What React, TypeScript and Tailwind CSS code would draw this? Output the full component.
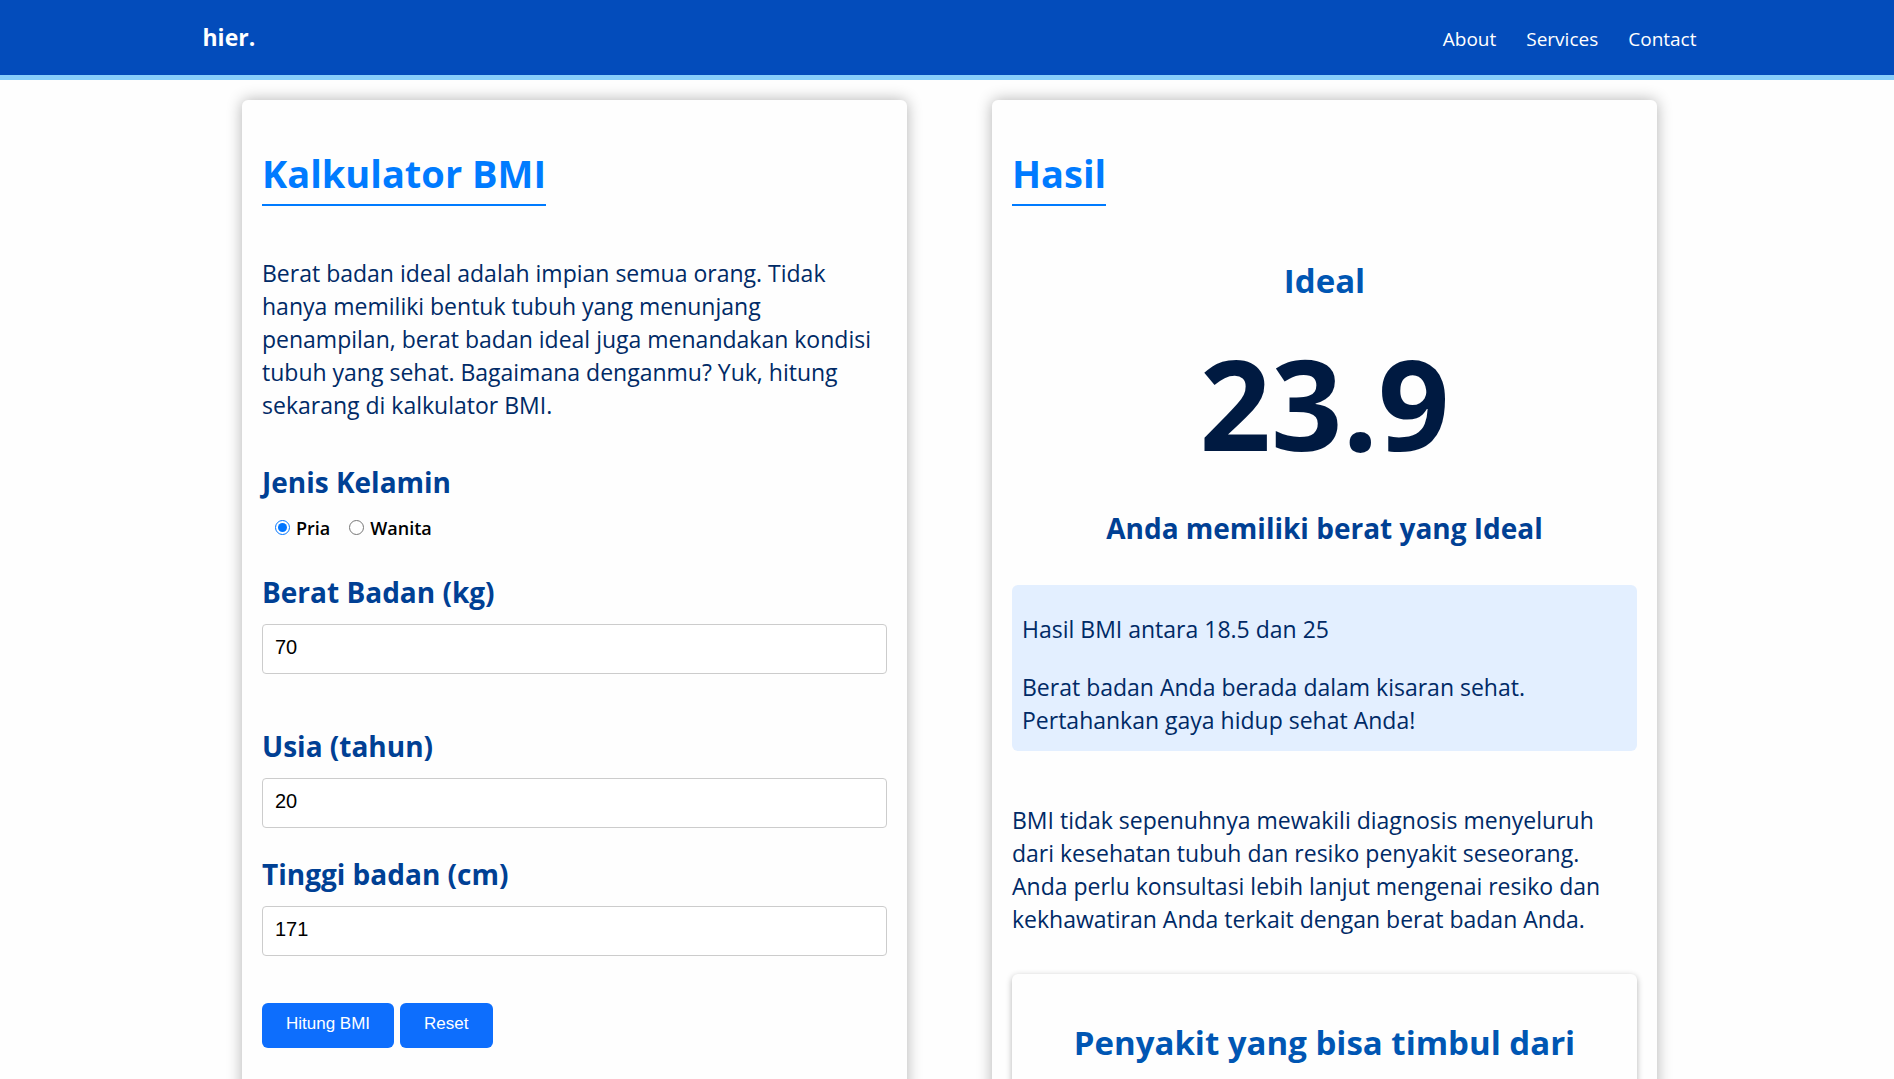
import { useState } from "react";
import type { FormEvent, ReactNode } from "react";

const navItems = ["About", "Services", "Contact"];

function Card({ children }: { children: ReactNode }) {
  return (
    <section className="w-full max-w-[665px] rounded-md bg-[#fefefe] p-5 shadow-[0_0_15px_rgba(0,0,0,0.3)]">
      {children}
    </section>
  );
}

function Title({ children }: { children: ReactNode }) {
  return (
    <h1 className="mt-[25px] w-fit border-b-2 border-[#007bff] pb-[3px] text-[38px] leading-14 font-bold text-[#007bff]">
      {children}
    </h1>
  );
}

function NumberField({ id, label, value, onChange }: { id: string; label: string; value: string; onChange: (v: string) => void }) {
  return (
    <div>
      <label htmlFor={id} className="block text-[28px] leading-10 font-bold text-[#004094]">
        {label}
      </label>
      <input
        id={id}
        type="text"
        inputMode="numeric"
        value={value}
        onChange={(e) => onChange(e.target.value)}
        className="mt-3 block h-[50px] w-full rounded-sm border border-[#cccccc] bg-white px-3 pb-1 font-['Liberation_Sans',sans-serif] text-xl text-black"
      />
    </div>
  );
}

export default function App() {
  const [gender, setGender] = useState("Pria");
  const [weight, setWeight] = useState("70");
  const [age, setAge] = useState("20");
  const [height, setHeight] = useState("171");

  const buttonClass =
    "h-[45px] rounded-md bg-[#0d6efd] px-6 pb-1 font-['Liberation_Sans',sans-serif] text-[17px] text-white";

  return (
    <div className="min-h-screen bg-[#fefefe] font-['Open_Sans',sans-serif]">
      <header className="border-b-5 border-[#87cefa] bg-[#034cbb] pl-[5px] text-white">
        <div className="mx-auto flex h-[75px] max-w-[1500px] items-center justify-between">
          <a href="#" className="pl-[3px] text-[23px] font-bold">hier.</a>
          <nav className="flex gap-[30px] pt-1 pr-[3px] text-[19px]">
            {navItems.map((item) => (
              <a key={item} href={`#${item.toLowerCase()}`}>{item}</a>
            ))}
          </nav>
        </div>
      </header>

      <main className="pt-5 pb-5 pl-[5px]">
        <div className="mx-auto flex max-w-[1500px] justify-around">
          <Card>
            <Title>Kalkulator BMI</Title>
            <p className="mt-[51px] text-[23px] leading-[33px] text-[#002a66]">
              Berat badan ideal adalah impian semua orang. Tidak hanya memiliki bentuk tubuh yang menunjang
              penampilan, berat badan ideal juga menandakan kondisi tubuh yang sehat. Bagaimana denganmu? Yuk,
              hitung sekarang di kalkulator BMI.
            </p>
            <form onSubmit={(e: FormEvent) => e.preventDefault()}>
              <fieldset className="mt-10">
                <legend className="text-[28px] leading-10 font-bold text-[#004094]">Jenis Kelamin</legend>
                <div className="mt-3.5 flex gap-[19px] pl-[13px] text-lg leading-6 font-semibold text-black">
                  {["Pria", "Wanita"].map((option) => (
                    <label key={option} className="flex gap-1.5">
                      <input
                        type="radio"
                        name="gender"
                        checked={gender === option}
                        onChange={() => setGender(option)}
                        className="mt-1 size-[15px] accent-[#0075ff]"
                      />
                      {option}
                    </label>
                  ))}
                </div>
              </fieldset>
              <div className="mt-8">
                <NumberField id="berat" label="Berat Badan (kg)" value={weight} onChange={setWeight} />
              </div>
              <div className="mt-[52px]">
                <NumberField id="usia" label="Usia (tahun)" value={age} onChange={setAge} />
              </div>
              <div className="mt-[26px]">
                <NumberField id="tinggi" label="Tinggi badan (cm)" value={height} onChange={setHeight} />
              </div>
              <div className="mt-[47px] flex gap-1.5">
                <button type="submit" className={buttonClass}>Hitung BMI</button>
                <button
                  type="button"
                  className={buttonClass}
                  onClick={() => {
                    setWeight("");
                    setAge("");
                    setHeight("");
                  }}
                >
                  Reset
                </button>
              </div>
            </form>
          </Card>

          <Card>
            <Title>Hasil</Title>
            <div className="mt-[51px] text-center font-bold">
              <h2 className="text-[33px] leading-12 text-[#0056b3]">Ideal</h2>
              <p className="mt-[18px] text-[125px] leading-[160px] text-[#001a41]">23.9</p>
              <h3 className="mt-[25px] text-[28px] leading-10 text-[#004094]">Anda memiliki berat yang Ideal</h3>
            </div>
            <div className="mt-[37px] rounded-md bg-[#e3efff] px-2.5 pt-7 pb-3.5 text-[23px] leading-[33px] text-[#002a66]">
              <p>Hasil BMI antara 18.5 dan 25</p>
              <p className="mt-[25px]">Berat badan Anda berada dalam kisaran sehat. Pertahankan gaya hidup sehat Anda!</p>
            </div>
            <p className="mt-[53px] text-[23px] leading-[33px] text-[#002a66]">
              BMI tidak sepenuhnya mewakili diagnosis menyeluruh dari kesehatan tubuh dan resiko penyakit
              seseorang. Anda perlu konsultasi lebih lanjut mengenai resiko dan kekhawatiran Anda terkait dengan
              berat badan Anda.
            </p>
            <div className="mt-[38px] rounded-md bg-[#fefefe] px-5 pt-[45px] pb-10 text-center shadow-[0_2px_6px_rgba(0,0,0,0.3)]">
              <h2 className="text-[33px] leading-12 font-bold text-[#0056b3]">Penyakit yang bisa timbul dari</h2>
            </div>
          </Card>
        </div>
      </main>
    </div>
  );
}
